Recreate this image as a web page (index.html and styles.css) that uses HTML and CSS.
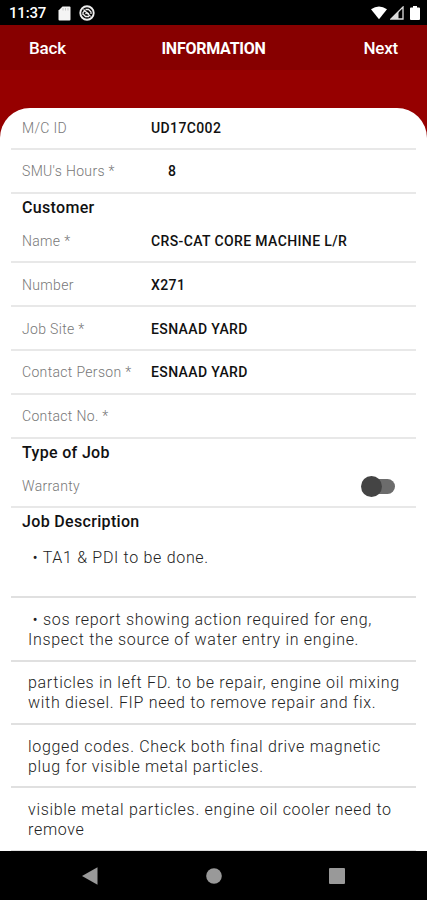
FILE: index.html
```html
<!DOCTYPE html>
<html lang="en">
<head>
    <meta charset="UTF-8">
    <meta name="viewport" content="width=device-width, initial-scale=1.0">
    <title>Information</title>
    <link rel="stylesheet" href="styles.css">
</head>
<body>
    <div class="status-bar">
        <span class="time">11:37</span>
        <svg class="sd-icon" width="13" height="15" viewBox="0 0 13 15"><path d="M4.5 0.5H11.5Q12.5 0.5 12.5 1.5V13.5Q12.5 14.5 11.5 14.5H1.5Q0.5 14.5 0.5 13.5V4.5Z" fill="#f4f4f4"/><path d="M5 2V4.5M7.5 2V4.5M10 2V4.5" stroke="#bbb" stroke-width="0.8"/></svg>
        <svg class="app-icon" width="16" height="16" viewBox="0 0 16 16" fill="none" stroke="#eee"><circle cx="8" cy="8" r="6.7" stroke-width="1.9"/><path d="M4 10V7.5L6 5.5M6.5 4.5H9.5L12 7V9M10 11.5H6.5L4.5 9.5M4.5 4.5L11.5 11.5M6.5 9L8 7.5L10 9" stroke-width="1.3"/></svg>
        <div class="status-right">
            <svg width="16" height="14" viewBox="0 0 16 14"><path d="M0 3.2Q8-2.4 16 3.2L8 13.3Z" fill="#fff"/></svg>
            <svg width="14" height="14" viewBox="0 0 14 14"><path d="M1 13L13 1V13Z" fill="none" stroke="#ddd" stroke-width="1.3"/><path d="M1 13L8.5 5.5V13Z" fill="#ddd"/></svg>
            <svg width="10" height="14" viewBox="0 0 10 14"><path d="M3 0H7V1.5H9Q10 1.5 10 2.5V13Q10 14 9 14H1Q0 14 0 13V2.5Q0 1.5 1 1.5H3Z" fill="#fff"/></svg>
        </div>
    </div>

    <div class="header">
        <span class="nav-btn">Back</span>
        <span class="header-title">INFORMATION</span>
        <span class="nav-btn next">Next</span>
    </div>

    <div class="content">
        <div class="card">
            <div class="row first"><span class="label">M/C ID</span><span class="value">UD17C002</span></div>
            <div class="row"><span class="label">SMU's Hours *</span><span class="value hours">8</span></div>

            <h2>Customer</h2>
            <div class="row short"><span class="label">Name *</span><span class="value">CRS-CAT CORE MACHINE L/R</span></div>
            <div class="row"><span class="label">Number</span><span class="value">X271</span></div>
            <div class="row"><span class="label">Job Site *</span><span class="value">ESNAAD YARD</span></div>
            <div class="row"><span class="label">Contact Person *</span><span class="value">ESNAAD YARD</span></div>
            <div class="row"><span class="label">Contact No. *</span><span class="value"></span></div>

            <h2>Type of Job</h2>
            <div class="row short">
                <span class="label">Warranty</span>
                <div class="switch"><div class="knob"></div></div>
            </div>

            <h2>Job Description</h2>
            <div class="note tall">&nbsp;• TA1 &amp; PDI to be done.</div>
            <div class="note">&nbsp;• sos report showing action required for eng,<br>Inspect the source of water entry in engine.</div>
            <div class="note">particles in left FD. to be repair, engine oil mixing<br>with diesel. FIP need to remove repair and fix.</div>
            <div class="note">logged codes. Check both final drive magnetic<br>plug for visible metal particles.</div>
            <div class="note">visible metal particles. engine oil cooler need to<br>remove</div>
        </div>
    </div>

    <div class="nav-bar">
        <svg width="16" height="18" viewBox="0 0 16 18"><path d="M0 9L15.5 0.3V17.7Z" fill="#999"/></svg>
        <svg width="16" height="16" viewBox="0 0 16 16"><circle cx="8" cy="8" r="7.8" fill="#999"/></svg>
        <svg width="16" height="16" viewBox="0 0 16 16"><rect width="16" height="16" rx="1" fill="#999"/></svg>
    </div>
</body>
</html>
```
FILE: styles.css
```css
* {
    margin: 0;
    padding: 0;
    box-sizing: border-box;
}

body {
    width: 427px;
    height: 900px;
    display: flex;
    flex-direction: column;
    overflow: hidden;
    background: #960000;
    font-family: Roboto, sans-serif;
}

svg {
    display: block;
}

.status-bar {
    height: 25px;
    flex-shrink: 0;
    display: flex;
    align-items: center;
    padding: 1px 7px 0 9px;
    background: #000;
    color: #fff;
}

.time {
    width: 49px;
    font-size: 15px;
    font-weight: 500;
    letter-spacing: -0.2px;
}

.sd-icon {
    margin-right: 8px;
}

.status-right {
    margin-left: auto;
    display: flex;
    gap: 3px;
}

.status-right svg:last-child {
    margin-left: 3px;
}

.header {
    height: 45px;
    flex-shrink: 0;
    display: grid;
    grid-template-columns: 1fr auto 1fr;
    align-items: center;
    padding: 1px 29px 0;
    background: #870000;
    color: #fff;
}

.nav-btn {
    font-size: 17px;
    font-weight: 500;
    letter-spacing: -0.2px;
}

.next {
    text-align: right;
}

.header-title {
    font-size: 16px;
    font-weight: 700;
    letter-spacing: -0.25px;
}

.content {
    height: 781px;
    flex-shrink: 0;
    padding-top: 38px;
}

.card {
    height: 743px;
    overflow: hidden;
    padding: 0 11px;
    background: #fff;
    border-radius: 30px 30px 0 0;
}

.row {
    height: 43.8px;
    display: flex;
    align-items: center;
    padding: 1px 10px 0 11px;
    border-bottom: 2px solid #e8e8e8;
}

.row.first {
    height: 42px;
    padding-bottom: 1px;
}

.row.short {
    height: 42.2px;
    padding-top: 0;
}

.label {
    width: 129px;
    font-size: 14px;
    font-weight: 300;
    letter-spacing: 0.33px;
    color: #777;
}

.value {
    font-size: 14px;
    font-weight: 500;
    letter-spacing: 0.38px;
    color: #111;
}

.hours {
    margin-left: 17px;
}

h2 {
    height: 27.5px;
    padding-left: 11px;
    font-size: 16px;
    font-weight: 500;
    line-height: 28px;
    letter-spacing: 0.33px;
    color: #111;
}

.switch {
    width: 24px;
    height: 15px;
    display: flex;
    align-items: center;
    margin-left: auto;
    margin-right: 11px;
    background: #6c6c6c;
    border-radius: 8px;
}

.knob {
    width: 21px;
    height: 21px;
    flex-shrink: 0;
    margin-left: -10px;
    background: #444;
    border-radius: 50%;
}

.note {
    height: 63.4px;
    padding: 11.8px 0 0 17px;
    border-bottom: 2px solid #e0e0e0;
    font-size: 16px;
    font-weight: 300;
    line-height: 19.8px;
    letter-spacing: 0.69px;
    white-space: nowrap;
    color: #222;
}

.note.tall {
    height: 62.4px;
}

.nav-bar {
    height: 49px;
    flex-shrink: 0;
    display: flex;
    align-items: center;
    justify-content: space-between;
    padding: 0 82px;
    background: #000;
}
```
